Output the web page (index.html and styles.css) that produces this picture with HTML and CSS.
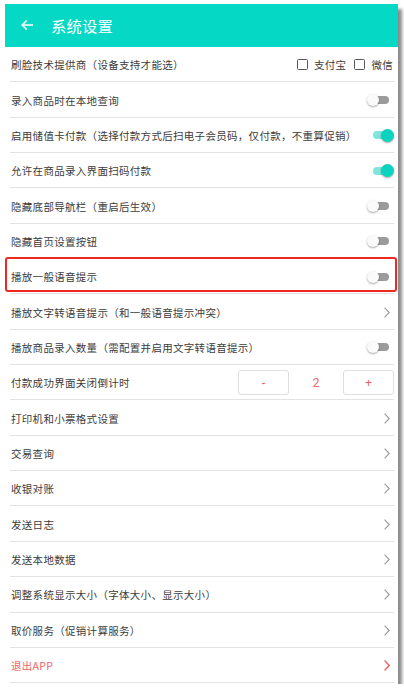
FILE: index.html
```html
<!DOCTYPE html>
<html lang="zh">
<head>
<meta charset="utf-8">
<link rel="stylesheet" href="styles.css">
</head>
<body>
<div class="app">
  <header class="topbar">
    <svg class="back" width="12" height="10" viewBox="0 0 12 10"><path d="M11.5 5H1.2M5.2 1L1.2 5L5.2 9" fill="none" stroke="#fff" stroke-width="1.6" stroke-linecap="square"/></svg>
    <span class="title">系统设置</span>
  </header>
  <div class="list">
    <div class="row">
      <span class="label">刷脸技术提供商（设备支持才能选）</span>
      <span class="checks">
        <span class="check"><span class="box"></span>支付宝</span>
        <span class="check"><span class="box"></span>微信</span>
      </span>
    </div>
    <div class="row"><span class="label">录入商品时在本地查询</span><span class="toggle"></span></div>
    <div class="row"><span class="label">启用储值卡付款（选择付款方式后扫电子会员码，仅付款，不重算促销）</span><span class="toggle on"></span></div>
    <div class="row"><span class="label">允许在商品录入界面扫码付款</span><span class="toggle on"></span></div>
    <div class="row"><span class="label">隐藏底部导航栏（重启后生效）</span><span class="toggle"></span></div>
    <div class="row"><span class="label">隐藏首页设置按钮</span><span class="toggle"></span></div>
    <div class="row highlighted"><span class="label">播放一般语音提示</span><span class="toggle"></span><span class="mark"></span></div>
    <div class="row"><span class="label">播放文字转语音提示（和一般语音提示冲突）</span><svg class="chev" width="6" height="11" viewBox="0 0 6 11"><path d="M0.6 0.6L5.2 5.5L0.6 10.4" fill="none" stroke="#9a9a9a" stroke-width="1.1"/></svg></div>
    <div class="row"><span class="label">播放商品录入数量（需配置并启用文字转语音提示）</span><span class="toggle"></span></div>
    <div class="row">
      <span class="label">付款成功界面关闭倒计时</span>
      <span class="stepper">
        <span class="step-btn">-</span>
        <span class="step-val">2</span>
        <span class="step-btn">+</span>
      </span>
    </div>
    <div class="row"><span class="label">打印机和小票格式设置</span><svg class="chev" width="6" height="11" viewBox="0 0 6 11"><path d="M0.6 0.6L5.2 5.5L0.6 10.4" fill="none" stroke="#9a9a9a" stroke-width="1.1"/></svg></div>
    <div class="row"><span class="label">交易查询</span><svg class="chev" width="6" height="11" viewBox="0 0 6 11"><path d="M0.6 0.6L5.2 5.5L0.6 10.4" fill="none" stroke="#9a9a9a" stroke-width="1.1"/></svg></div>
    <div class="row"><span class="label">收银对账</span><svg class="chev" width="6" height="11" viewBox="0 0 6 11"><path d="M0.6 0.6L5.2 5.5L0.6 10.4" fill="none" stroke="#9a9a9a" stroke-width="1.1"/></svg></div>
    <div class="row"><span class="label">发送日志</span><svg class="chev" width="6" height="11" viewBox="0 0 6 11"><path d="M0.6 0.6L5.2 5.5L0.6 10.4" fill="none" stroke="#9a9a9a" stroke-width="1.1"/></svg></div>
    <div class="row"><span class="label">发送本地数据</span><svg class="chev" width="6" height="11" viewBox="0 0 6 11"><path d="M0.6 0.6L5.2 5.5L0.6 10.4" fill="none" stroke="#9a9a9a" stroke-width="1.1"/></svg></div>
    <div class="row"><span class="label">调整系统显示大小（字体大小、显示大小）</span><svg class="chev" width="6" height="11" viewBox="0 0 6 11"><path d="M0.6 0.6L5.2 5.5L0.6 10.4" fill="none" stroke="#9a9a9a" stroke-width="1.1"/></svg></div>
    <div class="row"><span class="label">取价服务（促销计算服务）</span><svg class="chev" width="6" height="11" viewBox="0 0 6 11"><path d="M0.6 0.6L5.2 5.5L0.6 10.4" fill="none" stroke="#9a9a9a" stroke-width="1.1"/></svg></div>
    <div class="row exit"><span class="label">退出APP</span><svg class="chev" width="6" height="11" viewBox="0 0 6 11"><path d="M0.6 0.6L5.2 5.5L0.6 10.4" fill="none" stroke="#f0666a" stroke-width="1.4"/></svg></div>
  </div>
</div>
</body>
</html>
```

FILE: styles.css
```css
* { box-sizing: border-box; }
html, body { margin: 0; padding: 0; background: #fff; }
body {
  font-family: "Noto Sans CJK SC", "Noto Sans", sans-serif;
  color: #3c3c3c;
}
.app {
  margin: 4px 0 0 5px;
  width: 393px;
  height: 680px;
  background: #fff;
  box-shadow: 4px 5px 3px rgba(0, 0, 0, 0.45);
  overflow: hidden;
}
.topbar {
  height: 43px;
  background: #05d9c5;
  display: flex;
  align-items: center;
  padding-left: 16px;
  padding-bottom: 2px;
}
.back { display: block; margin-top: 1px; }
.title {
  color: #fff;
  font-size: 15.3px;
  margin-left: 18px;
  letter-spacing: 0.2px;
}
.list {
  padding: 0 4px 0 5px;
}
.row {
  position: relative;
  height: 35.35px;
  border-bottom: 1px solid #e3e3e3;
  display: flex;
  align-items: center;
  justify-content: space-between;
  padding: 1px 0 0 1px;
}
.label {
  font-size: 10.5px;
  letter-spacing: 0.3px;
  color: #3c3c3c;
  white-space: nowrap;
}
.exit .label { color: #f0666a; }
.chev { margin-right: 4px; display: block; }
.checks { display: flex; align-items: center; font-size: 10.5px; color: #3c3c3c; margin-right: 1px; }
.check { display: flex; align-items: center; margin-left: 8px; letter-spacing: 0.3px; }
.box {
  width: 11px;
  height: 11px;
  border: 1.2px solid #555;
  border-radius: 1.5px;
  margin-right: 6px;
}
.toggle {
  position: relative;
  width: 24px;
  height: 14px;
  margin-right: 3px;
}
.toggle::before {
  content: "";
  position: absolute;
  left: 4px;
  right: 2px;
  top: 3px;
  height: 8px;
  border-radius: 4px;
  background: #9b9b9b;
}
.toggle::after {
  content: "";
  position: absolute;
  left: 0;
  top: 1px;
  width: 12px;
  height: 12px;
  border-radius: 50%;
  background: #fafafa;
  box-shadow: 0 1px 2px rgba(0, 0, 0, 0.35);
}
.toggle.on { margin-right: 0; }
.toggle.on::before { background: #7fe6da; left: 3px; right: 1px; }
.toggle.on::after { left: auto; right: 0; background: #0bd3bf; width: 13px; height: 13px; top: 0.5px; }
.stepper { display: flex; align-items: center; }
.step-btn {
  width: 51px;
  height: 25px;
  border: 1px solid #dedede;
  border-radius: 3px;
  display: flex;
  align-items: center;
  justify-content: center;
  color: #f55a5a;
  font-family: "Liberation Sans", sans-serif;
  font-size: 12px;
}
.step-val {
  width: 54px;
  text-align: center;
  color: #f36a6a;
  font-family: "Roboto", sans-serif;
  font-size: 12.5px;
}
.mark {
  position: absolute;
  left: -5px;
  right: -3px;
  top: -2px;
  bottom: 1px;
  border: 2px solid #ec2a22;
  border-radius: 3px;
  pointer-events: none;
}
```
